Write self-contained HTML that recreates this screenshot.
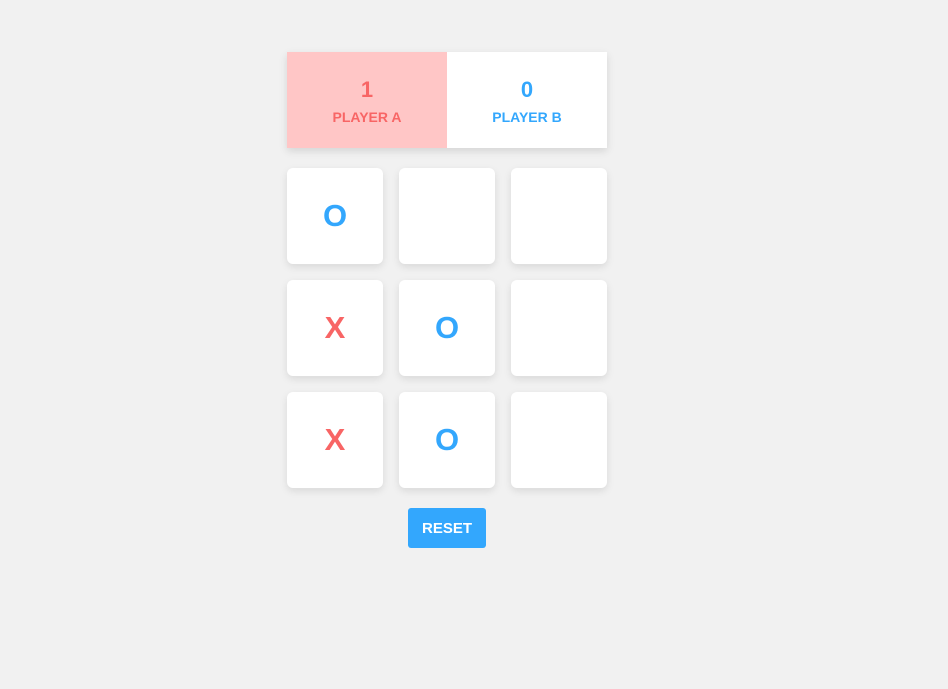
<!DOCTYPE html>
<html><head><style>
html,body{margin:0;padding:0;background:#f1f1f1;width:948px;height:689px;overflow:hidden;font-family:"Liberation Sans",sans-serif;font-weight:bold}
.score{position:absolute;left:287px;top:52px;width:320px;height:96px;display:flex;box-shadow:0 3px 8px rgba(0,0,0,0.12)}
.score div{flex:1;display:flex;flex-direction:column;align-items:center;padding-top:24px;box-sizing:border-box}
.a{background:#ffc6c6;color:#f86565}
.b{background:#fff;color:#33a7fd}
.n{font-size:22px;line-height:28px}
.l{font-size:14px;line-height:20px;margin-top:3px}
.cell{position:absolute;width:96px;height:96px;background:#fff;border-radius:6px;box-shadow:0 3px 8px rgba(0,0,0,0.1);display:flex;align-items:center;justify-content:center;font-size:31px}
.o{color:#33a7fd}.x{color:#f86565}
.btn{position:absolute;left:408px;top:508px;width:78px;height:40px;background:#33a7fd;color:#fff;border-radius:3px;display:flex;align-items:center;justify-content:center;font-size:15px}
</style></head><body>
<div class="score"><div class="a"><span class="n">1</span><span class="l">PLAYER A</span></div><div class="b"><span class="n">0</span><span class="l">PLAYER B</span></div></div>
<div class="cell o" style="left:287px;top:168px">O</div>
<div class="cell" style="left:399px;top:168px"></div>
<div class="cell" style="left:511px;top:168px"></div>
<div class="cell x" style="left:287px;top:280px">X</div>
<div class="cell o" style="left:399px;top:280px">O</div>
<div class="cell" style="left:511px;top:280px"></div>
<div class="cell x" style="left:287px;top:392px">X</div>
<div class="cell o" style="left:399px;top:392px">O</div>
<div class="cell" style="left:511px;top:392px"></div>
<div class="btn">RESET</div>
</body></html>
